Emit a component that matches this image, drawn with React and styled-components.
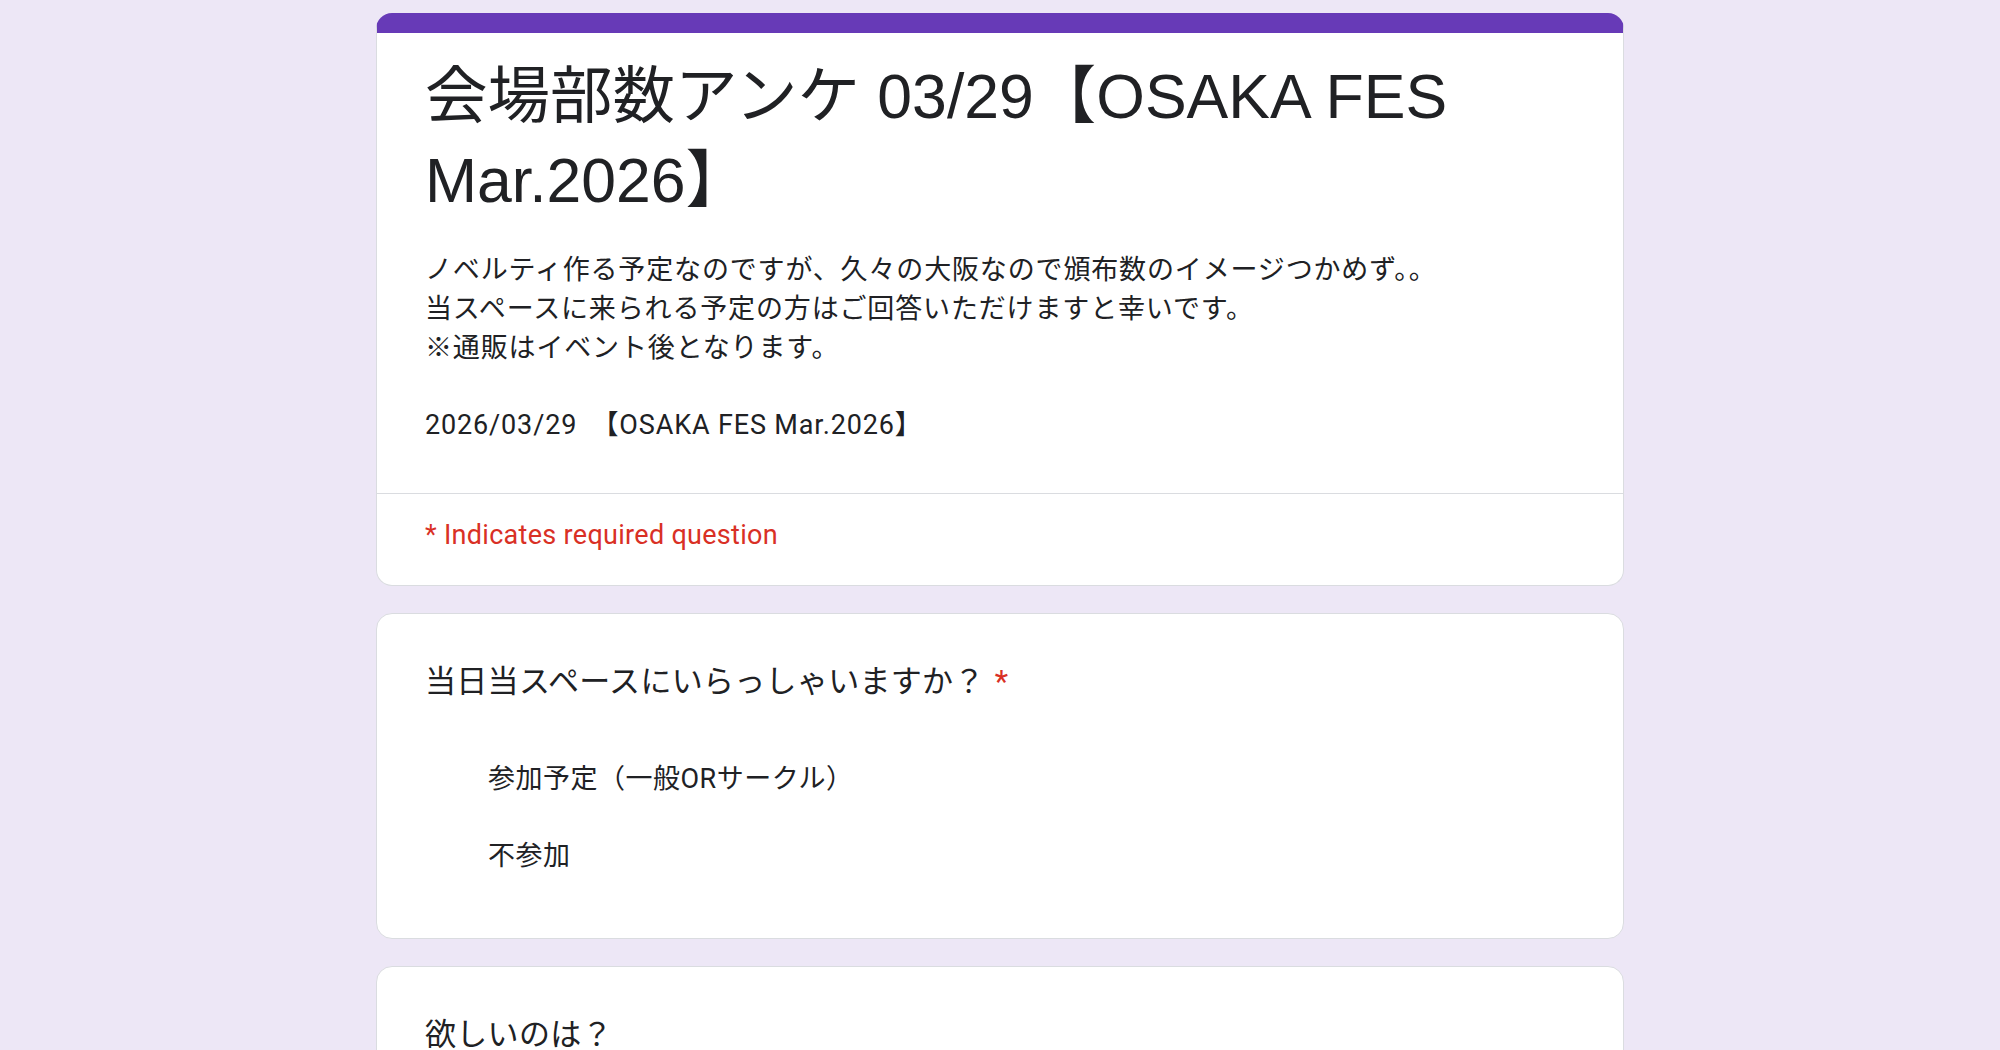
import styled, { createGlobalStyle } from 'styled-components'

const GlobalStyle = createGlobalStyle`
  html, body {
    margin: 0;
    padding: 0;
    background: #ede7f6;
  }
  body {
    font-family: Roboto, "Noto Sans CJK JP", sans-serif;
    color: #202124;
  }
`

const Page = styled.div`
  min-height: 1050px;
  padding: 13px 0 40px;
  box-sizing: border-box;
  display: flex;
  flex-direction: column;
  align-items: center;
  gap: 27px;
`

const Card = styled.div`
  width: 1248px;
  box-sizing: border-box;
  background: #fff;
  border: 1px solid #dadce0;
  border-radius: 16px;
  ${({ $accent }) => $accent && `
    border-top: 20px solid #673ab7;
  `}
`

const HeaderBody = styled.div`
  padding: 21px 48px 48px;
  border-bottom: 1px solid #dadce0;
`

const Title = styled.h1`
  margin: 0;
  font-family: "Liberation Sans", "Noto Sans CJK JP", sans-serif;
  font-weight: 400;
  font-size: 62.5px;
  line-height: 84px;
  color: #202124;
`

const Description = styled.div`
  margin-top: 29px;
  font-size: 27px;
  line-height: 38.75px;
  letter-spacing: 0.85px;
  white-space: pre-wrap;
  color: #202124;
`

const Required = styled.div`
  padding: 22px 48px 31px;
  font-size: 27px;
  line-height: 38px;
  letter-spacing: 0.3px;
  color: #d93025;
`

const QuestionBody = styled.div`
  padding: 45px 48px 46px;
  min-height: ${({ $minHeight }) => $minHeight || 0}px;
`

const QuestionTitle = styled.div`
  font-size: 31px;
  line-height: 46px;
  letter-spacing: 0.3px;
  color: #202124;
`

const Star = styled.span`
  color: #d93025;
  margin-left: 10px;
`

const Options = styled.div`
  margin-top: 33px;
  display: flex;
  flex-direction: column;
`

const Option = styled.label`
  display: flex;
  align-items: center;
  height: 77px;
  padding-left: 63px;
  font-size: 27px;
  letter-spacing: 0.5px;
  color: #202124;
`

const description = `ノベルティ作る予定なのですが、久々の大阪なので頒布数のイメージつかめず。。
当スペースに来られる予定の方はご回答いただけますと幸いです。
※通販はイベント後となります。

2026/03/29　【OSAKA FES Mar.2026】`

export default function App() {
  return (
    <>
      <GlobalStyle />
      <Page>
        <Card $accent>
          <HeaderBody>
            <Title>会場部数アンケ 03/29【OSAKA FES Mar.2026】</Title>
            <Description>{description}</Description>
          </HeaderBody>
          <Required>* Indicates required question</Required>
        </Card>

        <Card>
          <QuestionBody>
            <QuestionTitle>
              当日当スペースにいらっしゃいますか？<Star>*</Star>
            </QuestionTitle>
            <Options>
              <Option>参加予定（一般ORサークル）</Option>
              <Option>不参加</Option>
            </Options>
          </QuestionBody>
        </Card>

        <Card>
          <QuestionBody $minHeight={300}>
            <QuestionTitle>欲しいのは？</QuestionTitle>
          </QuestionBody>
        </Card>
      </Page>
    </>
  )
}
